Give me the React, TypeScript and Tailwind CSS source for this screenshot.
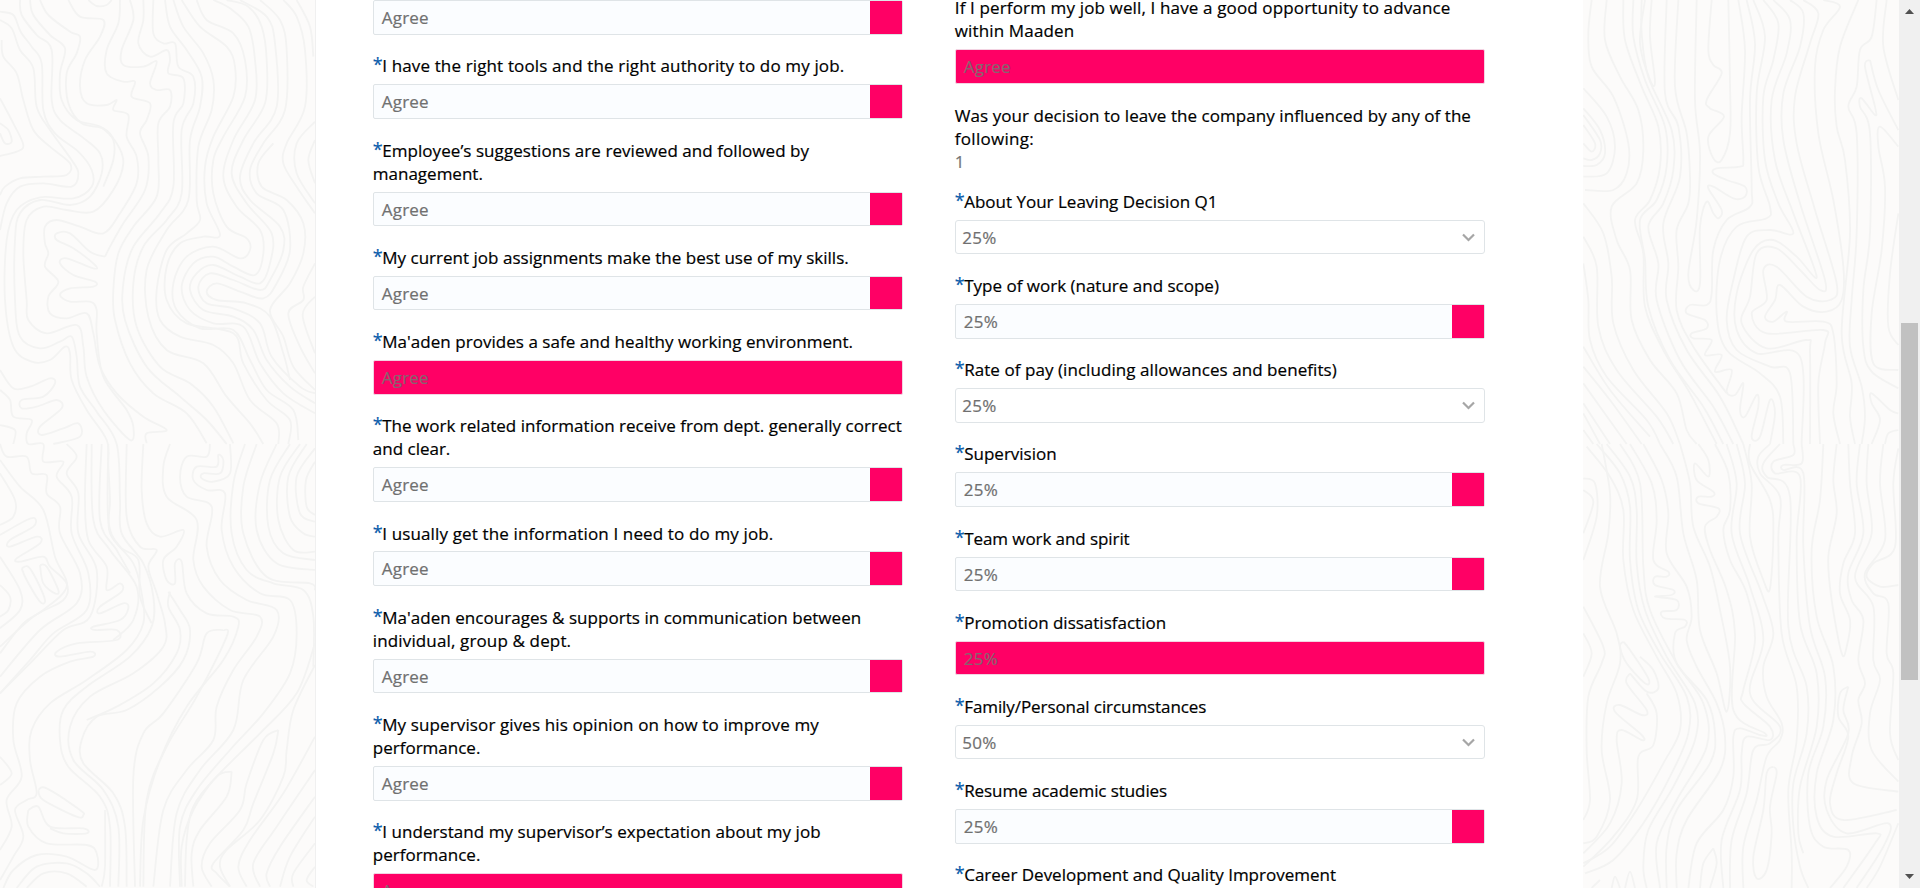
import React from "react";

type Kind = "lov" | "error" | "select" | "text";
type Line = [text: string, tracking: string];
type Item = { lines: Line[]; value: string; kind: Kind; optional?: boolean };

const TIGHT = "tracking-[-0.08px]";
const NORMAL = "tracking-[0px]";
const LOOSE = "tracking-[0.06px]";
const LOOSER = "tracking-[0.14px]";

const leftItems: Item[] = [
  { lines: [["I have the right tools and the right authority to do my job.", LOOSER]], value: "Agree", kind: "lov" },
  { lines: [["Employee’s suggestions are reviewed and followed by", LOOSE], ["management.", NORMAL]], value: "Agree", kind: "lov" },
  { lines: [["My current job assignments make the best use of my skills.", "tracking-[0.02px]"]], value: "Agree", kind: "lov" },
  { lines: [["Ma'aden provides a safe and healthy working environment.", "tracking-[0.04px]"]], value: "Agree", kind: "error" },
  { lines: [["The work related information receive from dept. generally correct", "tracking-[0.02px]"], ["and clear.", NORMAL]], value: "Agree", kind: "lov" },
  { lines: [["I usually get the information I need to do my job.", LOOSER]], value: "Agree", kind: "lov" },
  { lines: [["Ma'aden encourages & supports in communication between", "tracking-[0.04px]"], ["individual, group & dept.", LOOSER]], value: "Agree", kind: "lov" },
  { lines: [["My supervisor gives his opinion on how to improve my", "tracking-[0.12px]"], ["performance.", NORMAL]], value: "Agree", kind: "lov" },
  { lines: [["I understand my supervisor’s expectation about my job", LOOSE], ["performance.", NORMAL]], value: "Agree", kind: "error" },
];

const rightItems: Item[] = [
  { lines: [["If I perform my job well, I have a good opportunity to advance", LOOSER], ["within Maaden", LOOSER]], value: "Agree", kind: "error", optional: true },
  { lines: [["Was your decision to leave the company influenced by any of the", LOOSE], ["following:", "tracking-[0.3px]"]], value: "1", kind: "text", optional: true },
  { lines: [["About Your Leaving Decision Q1", NORMAL]], value: "25%", kind: "select" },
  { lines: [["Type of work (nature and scope)", NORMAL]], value: "25%", kind: "lov" },
  { lines: [["Rate of pay (including allowances and benefits)", LOOSE]], value: "25%", kind: "select" },
  { lines: [["Supervision", NORMAL]], value: "25%", kind: "lov" },
  { lines: [["Team work and spirit", TIGHT]], value: "25%", kind: "lov" },
  { lines: [["Promotion dissatisfaction", NORMAL]], value: "25%", kind: "error" },
  { lines: [["Family/Personal circumstances", TIGHT]], value: "50%", kind: "select" },
  { lines: [["Resume academic studies", TIGHT]], value: "25%", kind: "lov" },
  { lines: [["Career Development and Quality Improvement", NORMAL]], value: "25%", kind: "lov" },
];

function Field({ value, kind }: { value: string; kind: Kind }) {
  if (kind === "text") {
    return <div className="h-[20.5px] leading-[23.8px] text-[#757575]">{value}</div>;
  }
  if (kind === "select") {
    return (
      <div className="mt-[6.8px] flex h-[34.6px] items-center justify-between rounded-[3px] border border-[#dfe4e7] bg-white pt-[1px] pl-[6.5px] pr-[9px] text-[#707070]">
        <span>{value}</span>
        <svg width="13" height="9" viewBox="0 0 13 9" fill="none" stroke="#a6a6a6" strokeWidth="2.2">
          <path d="M1 1.5 L6.5 7 L12 1.5" />
        </svg>
      </div>
    );
  }
  if (kind === "error") {
    return (
      <div className="mt-[6.8px] flex h-[34.6px] items-center rounded-[2px] border border-[#f3d3e2] bg-[#ff0065] pt-[1px] pl-[8px] text-[#87656f]">
        {value}
      </div>
    );
  }
  return (
    <div className="mt-[6.8px] flex h-[34.6px] items-stretch rounded-[2px] border border-[#dfe4e7] bg-[#fbfdff] text-[#707070]">
      <span className="flex flex-1 items-center pt-[1px] pl-[8px]">{value}</span>
      <span className="w-[32px] bg-[#ff0065]" />
    </div>
  );
}

function Question({ item }: { item: Item }) {
  return (
    <div className="pt-[19.7px]">
      <div className="whitespace-nowrap leading-[23.1px] text-black">
        {item.lines.map(([text, tracking], i) => (
          <div key={i} className={`flex h-[23.1px] ${tracking}`}>
            {i === 0 && !item.optional && <span className="-mt-[1px] w-[9.4px] text-[18px] text-[#0b5cab]">*</span>}
            <span>{text}</span>
          </div>
        ))}
      </div>
      <Field value={item.value} kind={item.kind} />
    </div>
  );
}

/* Contour lines, in thirds of a pixel. */
const leftContours: string[] = [
  "0,35 40,45 62,95 95,140 125,190 130,330 165,400 235,455 275,510 275,560 220,595 120,592 50,630 20,720 15,900 40,1040 95,1085 150,1080 195,1040 210,1060 215,1140 260,1230 320,1320 325,1400 330,1500 330,1600 400,1690 425,1780 430,1870 380,1950 260,2040 150,2110 95,2190 90,2280 110,2380 80,2400 45,2430 70,2510 40,2570 0,2640",
  "0,60 35,85 60,150 100,205 110,320 150,390 215,480 235,520 215,560 130,550 60,560 20,610 0,690",
  "5,120 10,170 50,220 70,300 100,390 150,440 210,490 200,525 130,530 60,535 15,560 0,585",
  "0,295 40,370 70,435 50,455 0,468",
  "0,370 25,390 35,425 15,430 0,400",
  "60,0 65,45 110,105 155,150 155,300 180,360 245,410 300,460 305,520 270,590 210,615 120,600 60,640 45,720 45,900 60,1010 120,1045 180,1025 215,1010 230,1070 240,1160 290,1235 350,1332 360,1500 365,1600 430,1690 460,1790 455,1880 390,1970 260,2060 190,2130 180,2220 205,2300 300,2390 330,2480 330,2660",
  "90,0 100,45 150,105 195,145 180,220 185,300 230,360 300,380 350,430 370,490 340,570 280,635 200,630 130,620 80,660 70,760 80,900 85,960 140,1000 230,975 250,1040 260,1130 310,1230 390,1320 400,1280 380,1230 310,1130 290,1000 290,930 270,905 210,905 180,885 210,865 280,860 285,845 220,825 180,790 200,775 280,805 285,795 220,745 170,720 170,700 210,700 270,755 315,770",
  "120,0 145,45 210,95 240,110 230,160 200,220 205,310 245,370 310,385 340,420 340,480 310,560",
  "205,0 240,50 310,60 300,110 255,180 240,260 260,310 320,315 350,300 340,330 385,345 380,410 410,470 410,550 360,640 310,700 240,680 170,660 135,680 135,730 145,760 135,800 175,845 145,890 150,940 200,955 260,940 280,1000 300,1100 350,1180 430,1250 500,1290 440,1300 440,1330",
  "265,0 290,18 320,15 335,0",
  "360,0 355,70 320,150 320,220 370,245 405,245 395,290 450,310 440,360 420,400 445,470 435,570 370,670 330,740 315,770",
  "390,0 400,60 365,150 370,195 430,200 470,185 450,250 470,270 510,270 510,320 475,370 475,480 470,590 400,680 355,760 340,870 345,960 390,1090 460,1180 560,1240 620,1330",
  "430,0 430,60 415,130 450,170 500,150 510,180 505,220 550,235 550,310 520,370 520,560 480,640 400,740 370,850 375,960 440,1100 540,1190 620,1260 680,1332",
  "460,0 460,100 490,130 525,130 535,200 580,230 580,310 545,390 545,580 500,660 430,740 400,850 410,980 480,1100 570,1150 640,1220 700,1330",
  "495,0 510,80 560,150 605,230 600,320 570,420 565,600 500,690 440,810 445,950 500,1050 610,1090 680,1190 750,1270 790,1332",
  "520,0 550,80 610,160 640,240 635,330 595,440 590,600 600,660 560,700 500,750 470,870 480,960 540,1010 640,1035 700,1090 750,1200 830,1270 835,1332",
  "545,0 600,80 680,140 705,200 700,290 640,410 615,500 620,610 660,705 610,710 540,730 500,800 500,900 560,970 700,1000 730,1090 800,1200 870,1260 865,1332",
  "590,0 620,60 700,100 735,180 735,290 670,410 640,480 640,580 680,680 740,715 750,750 720,775 640,740 560,770 520,850 530,930 600,985 700,990 750,1080 800,1170 880,1230 895,1320",
  "640,0 690,25 745,80 765,180 765,300 700,420 670,530 710,620 780,690 790,760 765,825 700,800 640,770 580,790 545,860 570,930 640,970 730,980 780,1090 850,1180 945,1240",
  "680,0 745,20 785,80 800,180 795,310 730,420 695,520 740,610 815,700 810,790 780,850 720,830 640,795 590,820 570,870 610,930 700,950 760,990 800,1080 870,1160 945,1210",
  "720,0 800,50 825,130 830,320 760,430 720,530 750,600 840,680 850,750 810,840 780,870 700,840 630,820 595,860 620,910 700,925 780,970 815,1070 900,1160 945,1180",
  "780,0 840,60 860,150 855,330 790,430 750,510 770,580 850,630 870,750 830,850 790,895 720,875 650,850 620,875 650,900 740,910 810,950 850,1060 870,1140",
  "850,0 890,50 915,150 915,320 860,430 850,490 890,560 945,640",
  "890,0 930,80 940,170",
  "945,365 890,430 890,520 945,610",
  "945,420 925,480 945,550",
  "820,430 775,490 785,560 860,600 910,670 910,760 870,850 810,930 850,1010 880,1100 945,1170",
  "945,790 910,860 910,900 865,940 900,1040 945,1120",
  "945,890 908,945 945,1060",
  "0,1110 40,1165 90,1160 150,1135 165,1150 130,1190 65,1200 65,1225 110,1220 170,1200 185,1225 120,1280 125,1305 190,1285 235,1270 240,1310 160,1332",
  "0,1275 45,1290 40,1332",
  "0,1170 30,1200 40,1250 95,1260 80,1300 85,1332 130,1332 130,1385 190,1385 170,1430 215,1490 215,1600 265,1720 260,1830 160,1900 90,1980 0,2080",
  "0,1332 20,1370 80,1370 95,1420 140,1425 140,1480 180,1520 180,1600 240,1720 230,1810 120,1890 0,2030",
  "200,1332 230,1370 200,1420 235,1480 235,1600 290,1710 270,1850 190,1890 100,1980 0,2080",
  "260,1332 255,1500 265,1620 320,1700 320,1770 360,1750 365,1775 300,1820 300,1840 370,1810 385,1825 360,1860 280,1880 285,1890 350,1890 350,1920 230,1930 170,1955 180,1970 270,1955 280,1970 210,1985 120,2030 50,2110 40,2220 65,2330 20,2400 35,2480 0,2550",
  "275,1332 280,1560 330,1650 410,1760 400,1860 340,1920",
  "305,1332 300,1560 350,1650 390,1720",
  "325,1332 325,1560 360,1640 415,1680 420,1790 455,1870",
  "380,1332 380,1550 420,1640 470,1650 445,1700 470,1780 495,1870 490,1940 400,2020 270,2090 210,2180 220,2280 310,2370 355,2480 355,2660",
  "430,1332 425,1470 440,1570 480,1610 550,1590 530,1640 490,1680 500,1740 525,1750 525,1690 545,1685 560,1780 620,1840 700,1850 715,1880 670,1980 560,2120 480,2280 430,2460 420,2660",
  "510,1332 490,1400 500,1490 590,1560 580,1680 610,1760 690,1830 780,1850 770,1910 700,2010 650,2120 640,2220 560,2310 490,2430 460,2660",
  "630,1332 620,1370 560,1370 540,1430 560,1490 635,1520 620,1640 660,1740 740,1800 830,1830 820,1910 730,2040 700,2190 600,2310 530,2440 510,2660",
  "690,1332 690,1420 640,1445 605,1435 610,1420 660,1420 670,1380 655,1365 650,1400 590,1400 580,1440 620,1470 675,1480 665,1590 700,1700 780,1780 870,1800 890,1900 870,2020 790,2140 690,2250 590,2370 540,2480 540,2660",
  "735,1332 700,1450 695,1600 740,1710 820,1750 910,1770 940,1850 940,2000",
  "770,1332 730,1460 730,1600 800,1730 930,1750 945,1770",
  "830,1332 780,1450 770,1590 830,1690 945,1710",
  "870,1332 810,1440 805,1580 850,1660 945,1680",
  "900,1332 840,1430 835,1560 880,1650 945,1655",
  "920,1332 865,1430 870,1550 910,1600 945,1610",
  "945,1345 890,1430 900,1540 945,1565",
  "945,1385 918,1440 920,1520 945,1545",
  "0,1605 80,1560 105,1555 100,1580 30,1620 30,1640 110,1610 120,1630 50,1675 60,1685 130,1670 150,1700 200,1750 190,1800 100,1850 0,1940",
  "65,1705 85,1700 110,1740 135,1800 120,1805 80,1740 65,1705",
  "120,1695 140,1700 175,1770 165,1780 130,1750 120,1695",
  "0,1420 45,1500 40,1550 0,1575",
  "0,1670 60,1770 60,1830 0,1885",
  "0,1755 30,1790 25,1830 0,1850",
  "0,1380 60,1460 130,1530 165,1670 200,1760 130,1830 70,1870 0,1960",
  "505,1775 540,1830 570,1890 550,1980 480,2060 380,2130 290,2150 245,2220 250,2290 340,2380 375,2480 380,2660",
  "510,1775 505,1820 540,1890 530,1960 460,2050 350,2120 260,2160",
  "670,1890 620,1900 590,1990 490,2140 430,2200 400,2330 405,2660",
  "670,1890 680,1910 590,2090 500,2240 440,2400 430,2660",
  "945,1995 880,2130 860,2250 850,2330 780,2460 680,2550 660,2600 690,2660",
  "945,1930 890,2080 780,2200 650,2330 580,2420 560,2520 555,2660",
  "835,2190 790,2220 740,2350 720,2430 630,2530 605,2600 635,2660",
  "835,2190 820,2260 760,2410 730,2490 640,2590 650,2620 690,2660",
  "695,2315 650,2330 580,2430 545,2540 545,2660",
  "695,2315 680,2390 600,2490 575,2560 580,2660",
  "945,2210 850,2380 750,2520 715,2600 740,2660",
  "945,2310 830,2480 760,2590 780,2660",
  "945,2390 840,2540 800,2620 810,2660",
  "945,2450 870,2570 840,2660",
  "945,2530 880,2620 880,2660",
  "945,2600 920,2640 940,2660",
  "115,2370 140,2365 240,2430 250,2445 230,2450 130,2400 115,2370",
  "85,2430 115,2420 150,2480 250,2485 260,2500 190,2500 150,2485",
  "85,2430 85,2480 140,2530 260,2535 290,2560 285,2610 200,2570 110,2565 40,2610 10,2664",
  "50,2664 110,2600 200,2590 260,2620 300,2660",
  "80,2664 130,2620 200,2620 260,2660",
  "315,2430 315,2600 305,2660",
  "0,2270 35,2320 0,2355",
];

const rightContours: string[] = [
  "65,0 55,100 65,200 130,290 175,430 170,520 130,570 45,570",
  "110,0 105,120 150,230 205,330 220,450 200,550 125,620 140,720 180,810 185,960 240,1080 320,1180 350,1290 380,1332",
  "160,0 165,120 215,260 265,380 270,500 240,600 195,660 220,760 225,920 280,1050 360,1180 440,1332",
  "190,0 190,110 225,240 285,380 290,500 260,600 210,660 225,780 235,920 300,1080 400,1220 460,1332",
  "215,0 215,100 235,230 305,390 310,510 280,610 235,680 265,790 260,900 330,1080 430,1220 490,1332",
  "245,0 240,110 255,245 240,240 210,130 225,0",
  "290,0 285,280 325,380 330,530 280,670 295,790 290,900 350,1050 450,1190 520,1332",
  "325,0 315,260 350,400 360,530 355,610 320,690 325,800 320,930 370,1040 470,1180",
  "380,0 375,300 390,460 380,660 355,820 370,870 390,850 390,680 410,605 430,640 445,655 455,630 415,565 430,560 490,595 525,590 525,560 470,540 430,520 440,505 510,500 520,480 515,350 525,150 505,0",
  "425,0 415,150 430,195 455,220 410,300 420,325 462,350 415,410 430,475 455,480 480,400 480,250 475,0",
  "530,0 555,130 540,300 545,560 540,620 470,660 430,750 425,880 410,915 360,915 350,940 405,960 410,985 365,1000 370,1015 425,1020 405,1065 455,1065 435,1115 485,1110 470,1175 495,1185 520,1150 510,1230 525,1250 560,1185 565,1220 545,1310 570,1310 600,1200 615,1240 600,1332",
  "550,0 585,110 560,280 565,500 600,620 590,655 500,680 450,780 440,940 470,1050 570,1120 630,1190 640,1332",
  "580,0 625,70 610,180 580,290 585,480 625,610 670,700 600,690 530,710 490,840 470,960 500,1050 600,1100 660,1120 670,1332",
  "610,0 660,60 650,160 605,300 615,480 670,640 740,830 680,770 610,720 550,750 500,880 500,990 560,1060 690,1070 695,1332",
  "660,0 700,40 690,140 640,280 640,420 690,610 765,840 750,870 690,810 620,745 560,760 540,890 515,970 590,1045 710,1020 720,1060 720,1332",
  "700,0 745,40 720,130 675,290 680,430 735,630 800,850 780,900 710,890 620,800 580,810 590,900 545,940 590,1000 760,990 765,1030 745,1150 750,1332",
  "760,0 810,20 760,90 735,200 745,400 790,600 820,800 815,900 770,935 700,920 630,855 615,900 585,950 610,965 650,935 650,965 760,965 790,1000 800,1150 790,1240 810,1332",
  "865,0 810,140 795,270 800,380 825,480 840,700 815,1000 845,1150 840,1250 855,1332",
  "920,0 905,110 870,150 860,260 835,320 860,400 860,700 845,900 840,1040 875,1160 885,1250 875,1332",
  "950,0 940,140 985,300",
  "900,180 885,200 915,320 915,345 875,295 870,320 900,400 900,700 880,870 880,1040 905,1115 985,1165",
  "900,180 925,270 985,390",
  "985,440 930,380 925,440 945,560 935,750 905,940 910,1090 985,1110",
  "985,640 960,820 955,980 985,1035",
  "985,1240 960,1230 905,1180 905,1210 930,1260 905,1332",
  "985,1290 955,1300 945,1332",
  "40,265 110,350 135,440 110,520 40,530",
  "40,325 90,390 105,460 80,495 40,498",
  "40,345 90,420 90,460 65,480 40,475",
  "40,375 75,430 65,455 40,430",
  "40,610 100,700 125,830 130,970 190,1110 290,1240 330,1332",
  "40,710 80,800 85,980 140,1110 260,1250 310,1332",
  "40,790 55,900 60,1020 110,1130 230,1260 270,1332",
  "40,1040 120,1170 240,1310",
  "40,1100 120,1200 215,1332",
  "40,1150 170,1332",
  "40,1210 120,1332",
  "40,1240 90,1332",
  "40,1290 70,1332",
  "50,1340 120,1430 160,1530 160,1680 190,1830 260,1970 320,2080 330,2190 280,2290 200,2430 120,2540 40,2590",
  "80,1332 150,1420 180,1520 180,1680 205,1830 270,1960 350,2090 355,2200 300,2330 220,2470 130,2580 45,2620",
  "110,1332 180,1430 200,1530 200,1690 225,1830 290,1970 375,2110 375,2220 310,2360 235,2490 220,2600 230,2664",
  "150,1332 210,1450 220,1700 240,1830 320,1990 400,2110 410,2240 320,2400 260,2530 270,2664",
  "180,1332 245,1450 260,1560 250,1680 295,1715 290,1730 255,1730 255,1755 310,1770 305,1785 255,1790 320,1800 320,1830 275,1835 285,1855 345,1860 345,1880 315,1900 320,1990 410,2100 435,2200 420,2290 320,2430 290,2540 290,2664",
  "220,1332 275,1440 295,1540 290,1660 350,1760 365,1850 350,1920 380,2000 440,2110 465,2210 450,2310 350,2460 320,2560 320,2664",
  "270,1332 320,1430 340,1600 380,1740 390,1890 440,2020 470,2135 480,2000 450,1830 420,1700 370,1580 360,1450 330,1332",
  "385,1332 415,1380 415,1430 375,1390 380,1440 430,1475 425,1490 385,1490 385,1510 445,1525 440,1550 405,1580 420,1650 470,1770 495,1900 490,2130 585,2200 570,2205 510,2185 490,2210 490,2330 460,2430 380,2530 355,2664",
  "435,1332 475,1420 480,1530 460,1590 480,1680 530,1780 555,1920 520,2070 520,2110 600,2180 600,2220 530,2210 515,2260 510,2370 455,2520 460,2664",
  "470,1332 500,1450 485,1600 540,1760 580,1920 540,2080 630,2180 600,2230 550,2250 530,2380 485,2520 480,2664",
  "500,1332 525,1450 510,1600 575,1780 610,1900 580,2000 590,2090 635,2170 630,2220 590,2270 560,2400 520,2540 520,2664",
  "520,1332 545,1450 540,1610 580,1740 600,1765 610,1600 600,1500 540,1390 540,1332",
  "600,1332 565,1370 570,1420 630,1490 625,1620 635,1900 680,2060 680,2220 655,2370 665,2560 665,2664",
  "630,1332 580,1390 590,1430 660,1490 655,1880 710,2060 710,2200 670,2350 670,2480 690,2600 715,2664",
  "670,1332 670,1365 610,1385 615,1420 690,1430 680,1620 690,1870 740,2020 740,2180 690,2360 685,2500 700,2560",
  "695,1332 695,1390 640,1395 640,1410 700,1420 700,1640 720,1880 765,2030 760,2180 715,2320 720,2480 760,2540 835,2550 830,2600 780,2664",
  "760,1332 750,1500 725,1650 740,1850 790,2000 790,2160 740,2320 740,2450 790,2510 920,2500 915,2530 820,2664",
  "800,1332 790,1440 800,1540 775,1670 785,1800 815,1960 830,1940 840,1860 810,1780 820,1690 855,1600 840,1450 835,1332",
  "870,1332 860,1450 880,1600 835,1720 845,1800 880,1860 865,1980 885,2050 865,2100 875,2170 845,2270 850,2350 985,2375",
  "895,1332 890,1450 905,1600 855,1730 910,1820 910,1980 930,2040 900,2140 905,2250 985,2345",
  "940,1332 930,1450 945,1620 885,1720 910,1780 955,1810 950,1960 970,2020 960,2200 985,2280",
  "985,1345 970,1450 975,1640 910,1690 890,1730 930,1760 985,1755",
  "835,2060 810,2080 805,2150 835,2210 800,2320 780,2410 820,2460 980,2430",
  "835,2060 820,2130 835,2200 770,2340 770,2430 830,2500 955,2470 940,2540 860,2664",
  "985,2470 930,2600 890,2664",
  "610,2300 590,2320 580,2430 550,2570 560,2635 590,2610 605,2500 600,2420 620,2320 610,2300",
  "430,2545 400,2590 390,2664",
  "430,2545 440,2590 420,2664",
  "160,1925 150,1940 170,1990 225,2050 235,2035 180,1950 160,1925",
  "40,1435 75,1450 80,1550 40,1680",
  "40,1470 70,1505 40,1600",
  "95,1332 120,1480 115,1600 90,1760 140,1900 150,1990 110,2110 95,2250 120,2400 80,2510 40,2530",
  "40,1820 100,1940 95,1990 55,2090 50,2250 60,2400 40,2460",
  "40,1900 65,1960 40,2030",
  "180,2020 170,2050 230,2130 215,2145 150,2115 135,2135 215,2205 215,2220 155,2190 140,2220 155,2350 120,2470 40,2560",
  "180,2020 230,2075 265,2065 250,2010 210,1970",
  "230,2080 260,2140 250,2235 205,2270 200,2400 130,2510 40,2600",
  "125,2664 135,2630 150,2664",
  "165,2664 180,2615 195,2664",
  "65,2664 90,2640",
];

/* Turns a list of points into a smooth curve that passes through each one. */
function smooth(spec: string): string {
  const p = spec.split(" ").map((s) => s.split(",").map(Number));
  let d = `M${p[0][0]} ${p[0][1]}`;
  for (let i = 0; i < p.length - 1; i++) {
    const a = p[i - 1] || p[i];
    const b = p[i];
    const c = p[i + 1];
    const e = p[i + 2] || c;
    d += `C${b[0] + (c[0] - a[0]) / 6} ${b[1] + (c[1] - a[1]) / 6} ${c[0] - (e[0] - b[0]) / 6} ${c[1] - (e[1] - b[1]) / 6} ${c[0]} ${c[1]}`;
  }
  return d;
}

function Contours({ lines, viewBox }: { lines: string[]; viewBox: string }) {
  return (
    <svg className="h-full w-full" viewBox={viewBox} preserveAspectRatio="none" fill="none" stroke="#f3f3f2" strokeWidth="5.5">
      {lines.map((line, i) => (
        <path key={i} d={smooth(line)} />
      ))}
    </svg>
  );
}

export default function App() {
  return (
    <div className="flex h-[888px] w-[1920px] overflow-hidden bg-[#fcfbfa] font-['Open_Sans','Noto_Sans',sans-serif] text-[17px] font-medium tracking-[0.2px] [-webkit-text-stroke:0.2px]">
      <div className="h-full w-[316px] shrink-0 border-r border-[#f0f0f0]">
        <Contours lines={leftContours} viewBox="0 0 945 2664" />
      </div>
      <main className="flex h-full w-[1267px] shrink-0 overflow-hidden bg-white pl-[56.8px]">
        <div className="w-[530px] shrink-0">
          <div className="-mt-[6.6px]">
            <Field value="Agree" kind="lov" />
          </div>
          {leftItems.map((item) => (
            <Question key={item.lines[0][0]} item={item} />
          ))}
        </div>
        <div className="ml-[52px] w-[530px] shrink-0">
          <div className="-mt-[23.4px]">
            {rightItems.map((item) => (
              <Question key={item.lines[0][0]} item={item} />
            ))}
          </div>
        </div>
      </main>
      <div className="h-full w-[316px] shrink-0">
        <Contours lines={rightContours} viewBox="39 0 948 2664" />
      </div>
      <div className="flex h-full w-[21px] shrink-0 flex-col items-center bg-[#f0f0f0]">
        <svg className="mt-[9px] shrink-0" width="9" height="5" viewBox="0 0 9 5" fill="#505050">
          <path d="M4.5 0 L9 5 H0 Z" />
        </svg>
        <div className="mt-[309px] h-[357px] w-[17px] shrink-0 bg-[#c1c1c1]" />
        <svg className="mt-auto mb-[9px] shrink-0" width="9" height="5" viewBox="0 0 9 5" fill="#505050">
          <path d="M0 0 H9 L4.5 5 Z" />
        </svg>
      </div>
    </div>
  );
}
